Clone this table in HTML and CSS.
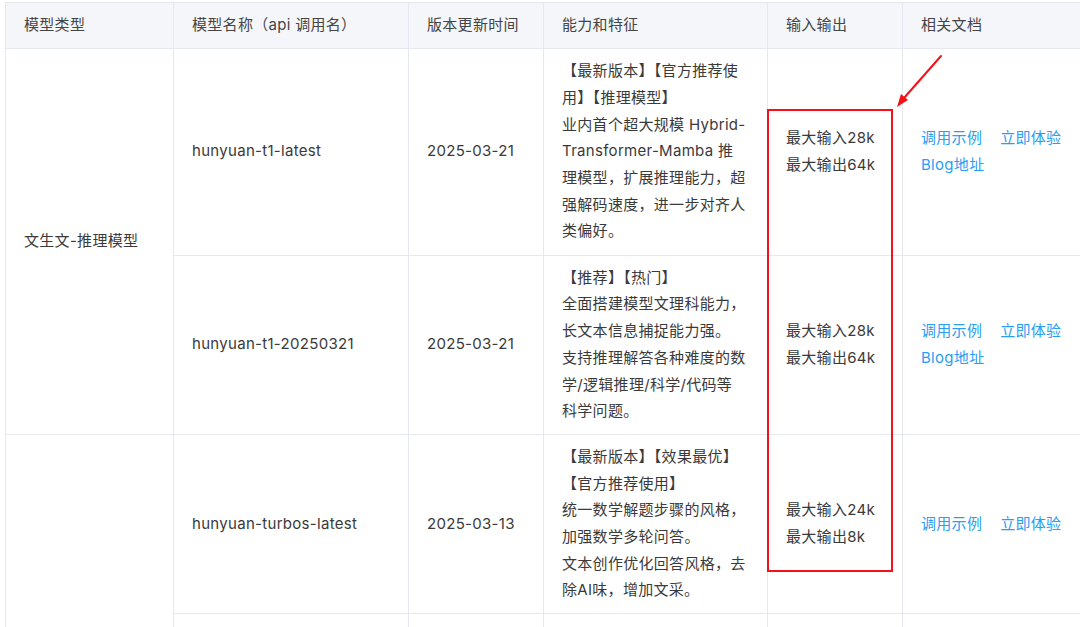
FILE: index.html
```html
<!DOCTYPE html>
<html lang="zh-CN">
<head>
<meta charset="utf-8">
<link rel="stylesheet" href="styles.css">
</head>
<body>
<div class="page">
  <table class="models">
    <colgroup>
      <col class="c1"><col class="c2"><col class="c3"><col class="c4"><col class="c5"><col class="c6">
    </colgroup>
    <thead>
      <tr>
        <th>模型类型</th>
        <th>模型名称（api 调用名）</th>
        <th>版本更新时间</th>
        <th>能力和特征</th>
        <th>输入输出</th>
        <th>相关文档</th>
      </tr>
    </thead>
    <tbody>
      <tr class="r1">
        <td rowspan="2">文生文-推理模型</td>
        <td>hunyuan-t1-latest</td>
        <td>2025-03-21</td>
        <td class="feat">【最新版本】【官方推荐使用】【推理模型】<br>业内首个超大规模 Hybrid-Transformer-Mamba 推理模型，扩展推理能力，超强解码速度，进一步对齐人类偏好。</td>
        <td>最大输入28k<br>最大输出64k</td>
        <td class="docs"><a>调用示例</a><a>立即体验</a><a>Blog地址</a></td>
      </tr>
      <tr class="r2">
        <td>hunyuan-t1-20250321</td>
        <td>2025-03-21</td>
        <td class="feat">【推荐】【热门】<br>全面搭建模型文理科能力，长文本信息捕捉能力强。<br>支持推理解答各种难度的数学/逻辑推理/科学/代码等科学问题。</td>
        <td>最大输入28k<br>最大输出64k</td>
        <td class="docs"><a>调用示例</a><a>立即体验</a><a>Blog地址</a></td>
      </tr>
      <tr class="r3">
        <td rowspan="2"></td>
        <td>hunyuan-turbos-latest</td>
        <td>2025-03-13</td>
        <td class="feat">【最新版本】【效果最优】<br>【官方推荐使用】<br>统一数学解题步骤的风格，加强数学多轮问答。<br>文本创作优化回答风格，去除AI味，增加文采。</td>
        <td>最大输入24k<br>最大输出8k</td>
        <td class="docs"><a>调用示例</a><a>立即体验</a></td>
      </tr>
      <tr class="r4">
        <td></td>
        <td></td>
        <td class="feat"></td>
        <td></td>
        <td class="docs"></td>
      </tr>
    </tbody>
  </table>
  <div class="highlight"></div>
  <svg class="arrow" width="60" height="64" viewBox="0 0 60 64">
    <line x1="52" y1="6" x2="15" y2="48" stroke="#f5101a" stroke-width="2" stroke-linecap="round"/>
    <polygon points="8,57 12,44 19,50" fill="#f5101a"/>
  </svg>
</div>
</body>
</html>
```

FILE: styles.css
```css
html, body {
  margin: 0;
  padding: 0;
  background: #fff;
  overflow: hidden;
}

.page {
  position: relative;
  width: 1080px;
  height: 627px;
  overflow: hidden;
  padding: 2px 0 0 5px;
  box-sizing: border-box;
}

.models {
  border-collapse: collapse;
  table-layout: fixed;
  width: 1097px;
  font-family: "Inter", "Noto Sans CJK SC", sans-serif;
  font-size: 15px;
  letter-spacing: 0.3px;
  color: #3a3a3a;
}

.c1 { width: 168px; }
.c2 { width: 235px; }
.c3 { width: 135px; }
.c4 { width: 224px; }
.c5 { width: 135px; }
.c6 { width: 200px; }

.models th,
.models td {
  border: 1px solid #e5e8f1;
  padding: 9px 14px 9px 18px;
  text-align: left;
  vertical-align: middle;
  line-height: 26.7px;
}

.models th {
  background: #f4f6fa;
  font-weight: normal;
  color: #454545;
  height: 26px;
}

.models td.feat {
  padding-right: 21px;
}

.r1 td { height: 188px; }
.r4 td { height: 180px; }

.docs a {
  color: #2a9df4;
  margin-right: 18px;
  white-space: nowrap;
}

.highlight {
  position: absolute;
  left: 767px;
  top: 109px;
  width: 126px;
  height: 463px;
  border: 2px solid #f5101a;
  box-sizing: border-box;
}

.arrow {
  position: absolute;
  left: 889px;
  top: 50px;
}
```
